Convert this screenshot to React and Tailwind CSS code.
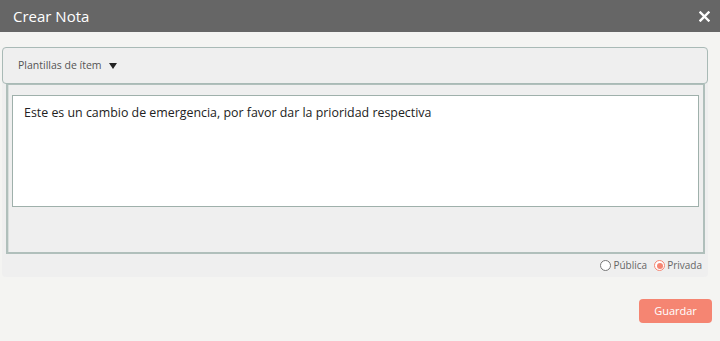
export default function App() {
  return (
    <div className="w-[720px] h-[341px] bg-[#f4f4f2] flex flex-col" style={{ fontFamily: '"Open Sans", sans-serif' }}>
      <div className="h-[32px] bg-[#666666] flex items-center justify-between pl-[13px] pr-[10px] shrink-0">
        <span className="text-white text-[15px] leading-none">Crear Nota</span>
        <svg width="11" height="11" viewBox="0 0 11 11">
          <path d="M1.5 1.5 L9.5 9.5 M9.5 1.5 L1.5 9.5" stroke="#ffffff" strokeWidth="2.4" strokeLinecap="square" />
        </svg>
      </div>
      <div className="pt-[15px] pl-[2px] pr-[12px]">
        <div className="bg-[#efefef] rounded-[4px] flex flex-col">
          <div className="h-[37px] border border-[#a9bab6] rounded-[4px] flex items-center pl-[15px] gap-[7px]">
            <span className="text-[10.5px] text-[#555555]">Plantillas de ítem</span>
            <svg width="8" height="6" viewBox="0 0 8 6"><path d="M0 0 L8 0 L4 6 Z" fill="#222" /></svg>
          </div>
          <div className="ml-[4px] mr-[3px] h-[170px] border-l-2 border-b-2 border-r-2 border-t border-[#b0bfbb] shadow-[inset_1px_0_0_#d8dfdd] pt-[10px] pl-[4px] pr-[4px]">
            <div className="h-[112px] bg-white border border-[#9fb0ab] pl-[11px] pt-[3px]">
              <span className="text-[12.4px] text-[#222222]">Este es un cambio de emergencia, por favor dar la prioridad respectiva</span>
            </div>
          </div>
          <div className="h-[23px] flex items-center justify-end pr-[6px] gap-[7px] text-[10px] text-[#666666]">
            <label className="flex items-center gap-[2px]">
              <span className="w-[11px] h-[11px] rounded-full border border-[#777777] bg-white"></span>
              <span>Pública</span>
            </label>
            <label className="flex items-center gap-[2px]">
              <span className="w-[11px] h-[11px] rounded-full border border-[#f58572] bg-white flex items-center justify-center">
                <span className="w-[6px] h-[6px] rounded-full bg-[#f58572]"></span>
              </span>
              <span>Privada</span>
            </label>
          </div>
        </div>
      </div>
      <div className="flex justify-end pr-[8px] pt-[22px]">
        <button className="w-[73px] h-[24px] rounded-[4px] bg-[#f58572] text-white text-[11px]">Guardar</button>
      </div>
    </div>
  );
}
